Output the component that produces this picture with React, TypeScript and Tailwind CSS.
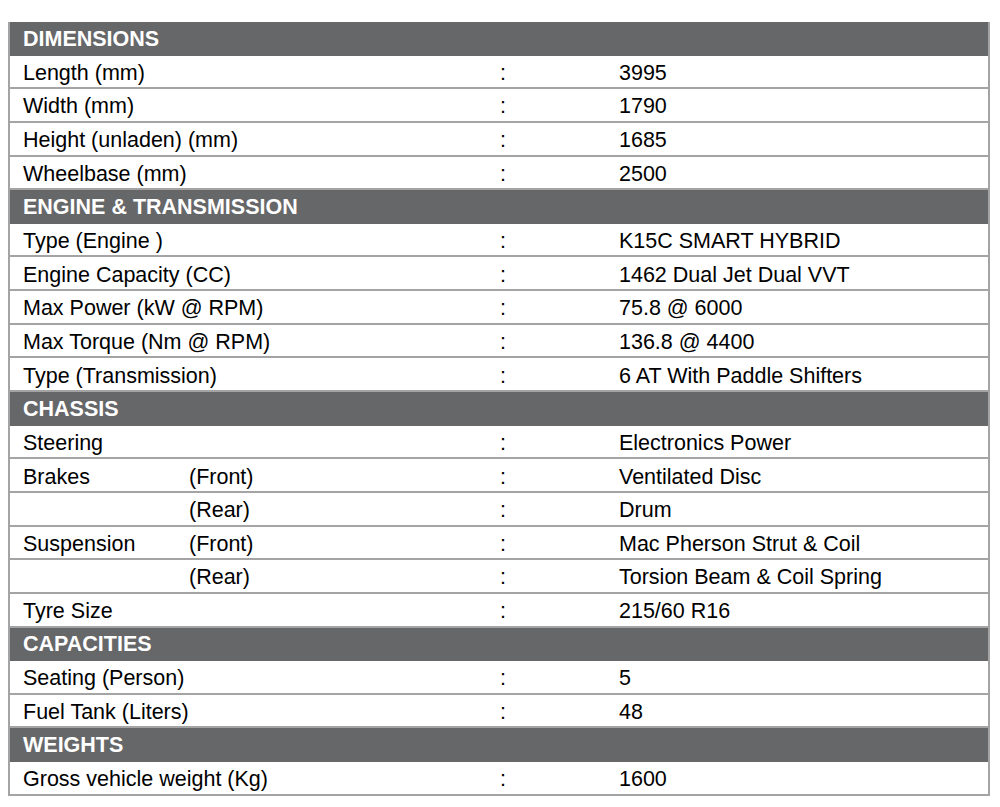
import React from "react";

type Row = {label: string; sub?: string; value: string};
type Section = {title: string; rows: Row[]};

const sections: Section[] = [
    {
        title: "DIMENSIONS",
        rows: [
            {label: "Length (mm)", value: "3995"},
            {label: "Width (mm)", value: "1790"},
            {label: "Height (unladen) (mm)", value: "1685"},
            {label: "Wheelbase (mm)", value: "2500"},
        ],
    },
    {
        title: "ENGINE & TRANSMISSION",
        rows: [
            {label: "Type (Engine )", value: "K15C SMART HYBRID"},
            {label: "Engine Capacity (CC)", value: "1462 Dual Jet Dual VVT"},
            {label: "Max Power (kW @ RPM)", value: "75.8 @ 6000"},
            {label: "Max Torque (Nm @ RPM)", value: "136.8 @ 4400"},
            {label: "Type (Transmission)", value: "6 AT With Paddle Shifters"},
        ],
    },
    {
        title: "CHASSIS",
        rows: [
            {label: "Steering", value: "Electronics Power"},
            {label: "Brakes", sub: "(Front)", value: "Ventilated Disc"},
            {label: "", sub: "(Rear)", value: "Drum"},
            {label: "Suspension", sub: "(Front)", value: "Mac Pherson Strut & Coil"},
            {label: "", sub: "(Rear)", value: "Torsion Beam & Coil Spring"},
            {label: "Tyre Size", value: "215/60 R16"},
        ],
    },
    {
        title: "CAPACITIES",
        rows: [
            {label: "Seating (Person)", value: "5"},
            {label: "Fuel Tank (Liters)", value: "48"},
        ],
    },
    {
        title: "WEIGHTS",
        rows: [
            {label: "Gross vehicle weight (Kg)", value: "1600"},
        ],
    },
];

const SpecRow = ({row}: {row: Row}) => (
    <div className="h-[33.65px] flex items-center pt-[3px] border-b-2 border-[#a4a4a4] text-[21.5px] text-black">
        <div className="w-[179px] shrink-0 pl-[13px] whitespace-nowrap">{row.label}</div>
        <div className="w-[311px] shrink-0 whitespace-nowrap">{row.sub}</div>
        <div className="w-[119px] shrink-0 whitespace-nowrap">:</div>
        <div className="whitespace-nowrap">{row.value}</div>
    </div>
);

export default function App() {
    return (
        <div className="w-[1000px] h-[807px] bg-white pt-[22px] pl-[8px] font-['Liberation_Sans',Arial,sans-serif]">
            <div className="w-[982px] border-x-2 border-[#a4a4a4]">
                {sections.map(section => (
                    <div key={section.title}>
                        <div className="h-[33.65px] flex items-center bg-[#666769] pl-[13px] text-[21.5px] font-bold text-white">
                            {section.title}
                        </div>
                        {section.rows.map((row, i) => (
                            <SpecRow key={i} row={row}/>
                        ))}
                    </div>
                ))}
            </div>
        </div>
    );
}
